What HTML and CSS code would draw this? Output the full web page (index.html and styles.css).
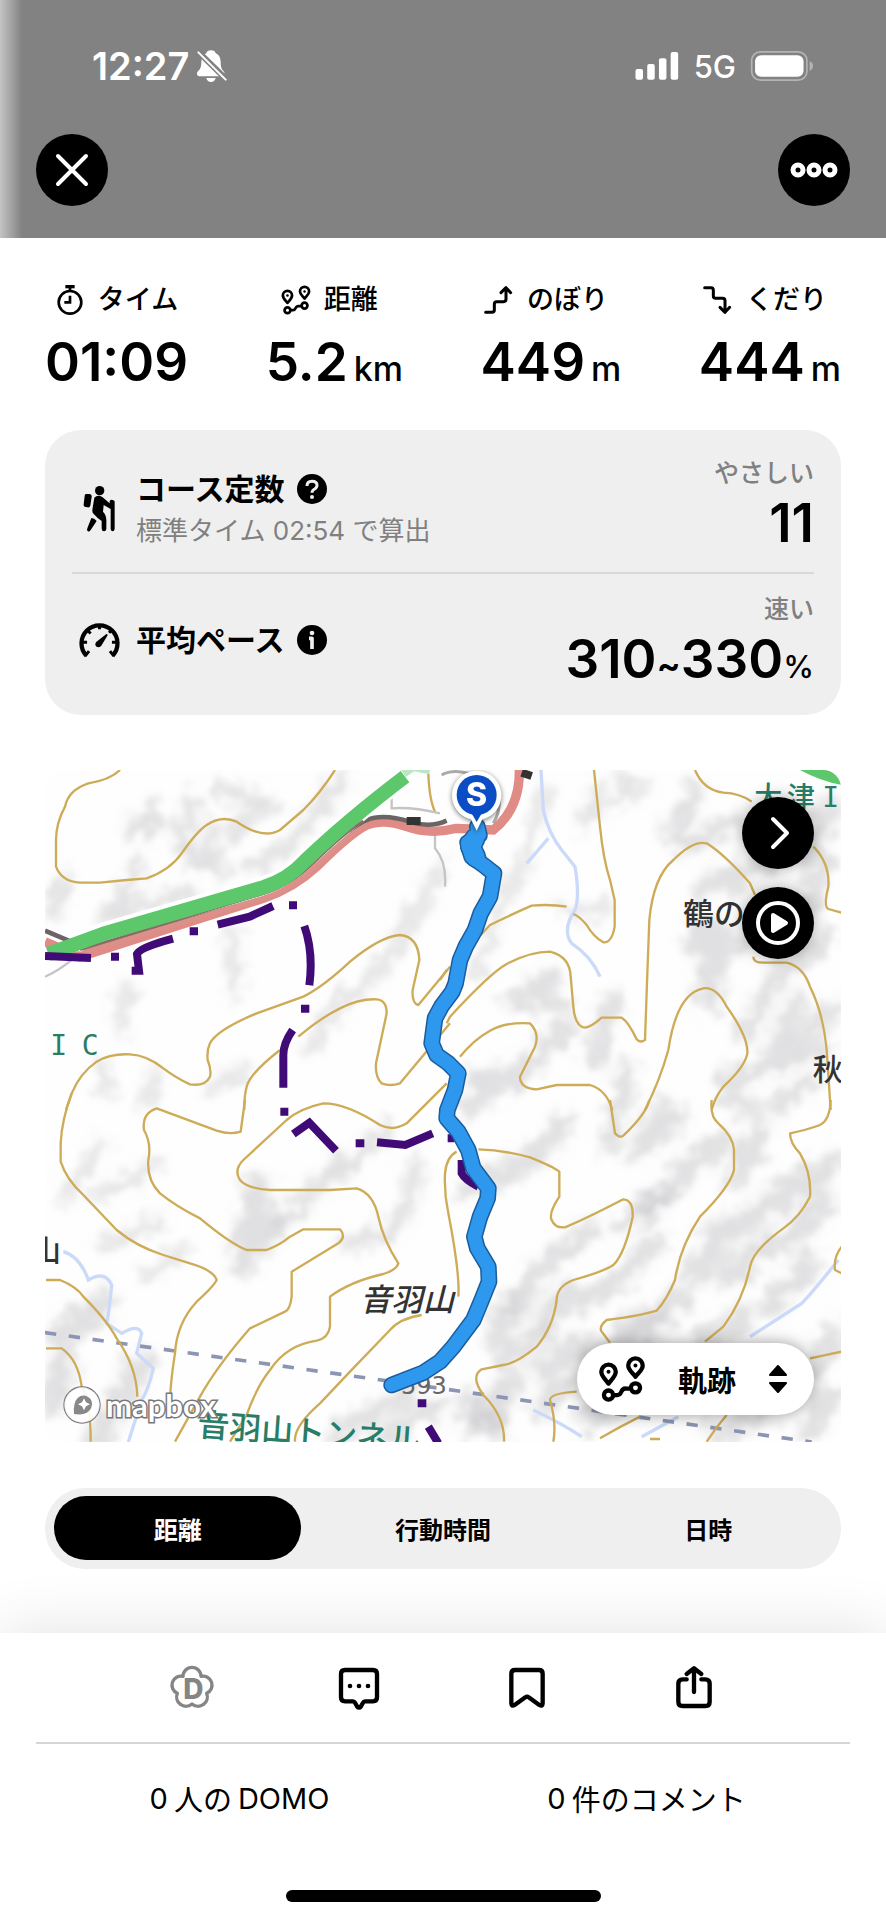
FILE: index.html
```html
<!DOCTYPE html>
<html lang="ja">
<head>
<meta charset="utf-8">
<meta name="viewport" content="width=device-width, initial-scale=1">
<title>活動記録</title>
<link rel="stylesheet" href="styles.css">
</head>
<body>
<svg class="defs" aria-hidden="true">
  <symbol id="route" viewBox="0 0 144 140">
    <g fill="none" stroke="currentColor" stroke-width="13" stroke-linecap="round" stroke-linejoin="round">
      <path d="M31 84C20 70 9 61 9 48a22 22 0 0 1 44 0C53 61 42 70 31 84Z"/>
      <path d="M113 63C102 49 91 42 91 29a22 22 0 0 1 44 0C135 42 124 49 113 63Z"/>
      <circle cx="31" cy="119" r="14"/><circle cx="113" cy="97" r="14"/>
      <path d="M46 119h12c16 0 8-22 26-20h14"/>
    </g>
    <circle cx="31" cy="48" r="6" fill="currentColor"/><circle cx="113" cy="29" r="6" fill="currentColor"/>
  </symbol>
</svg>

<header class="hero">
  <div class="status">
    <div class="status-group">
      <span class="clock">12:27</span>
      <svg class="bell" viewBox="0 0 90 96"><path fill="#fff" d="M42 1c-8 0-13 4-14 9C18 14 13 24 13 36c0 16-4 22-10 28-6 7-3 15 6 15h66c8 0 10-8 5-15-6-6-9-12-9-28C71 24 66 14 56 10 55 5 50 1 42 1ZM28 84c2 8 7 12 14 12s12-4 14-12Z"/><path stroke="#828282" stroke-width="18" d="M-2 0 92 92"/><path stroke="#fff" stroke-width="6" stroke-linecap="round" d="M4 7 86 89"/></svg>
    </div>
    <div class="status-group status-right">
      <svg class="signal" viewBox="0 0 132 86" fill="#fff"><rect y="52" width="23" height="33" rx="6"/><rect x="36" y="37" width="23" height="48" rx="6"/><rect x="72" y="19" width="23" height="66" rx="6"/><rect x="108" width="23" height="85" rx="6"/></svg>
      <span class="network">5G</span>
      <svg class="battery" viewBox="0 0 184 88"><rect x="2" y="2" width="164" height="84" rx="26" fill="none" stroke="#b4b4b4" stroke-width="5"/><rect x="12" y="12" width="144" height="64" rx="18" fill="#fff"/><path fill="#b4b4b4" d="M174 30q10 4 10 14t-10 14Z"/></svg>
    </div>
  </div>
  <nav class="hero-nav">
    <button class="round" type="button" aria-label="閉じる"><svg viewBox="0 0 72 72"><path d="m22 22 28 28m0-28L22 50" fill="none" stroke="#fff" stroke-width="4" stroke-linecap="round"/></svg></button>
    <button class="round" type="button" aria-label="メニュー"><svg viewBox="0 0 72 72" fill="none" stroke="#fff" stroke-width="5"><circle cx="20" cy="36" r="5"/><circle cx="36" cy="36" r="5"/><circle cx="52" cy="36" r="5"/></svg></button>
  </nav>
</header>

<main class="content">
  <dl class="stats">
    <div class="stat">
      <dt><svg class="stat-icon" viewBox="0 0 84 90" fill="none" stroke="#000" stroke-width="8"><circle cx="42" cy="52" r="34"/><path d="M42 18V8M42 32v20H25"/><path stroke-width="10" d="M28 5h28"/></svg><span>タイム</span></dt>
      <dd>01:09</dd>
    </div>
    <div class="stat">
      <dt><svg class="stat-icon"><use href="#route"/></svg><span>距離</span></dt>
      <dd><span>5.2</span><small>km</small></dd>
    </div>
    <div class="stat">
      <dt><svg class="stat-icon" viewBox="0 0 90 84" fill="none" stroke="#000" stroke-width="9" stroke-linejoin="round" stroke-linecap="round"><path d="M5 79h19q7 0 7-7V54q0-7 7-7h21q7 0 7-7V5M51 20 66 5l14 15"/></svg><span>のぼり</span></dt>
      <dd><span>449</span><small>m</small></dd>
    </div>
    <div class="stat">
      <dt><svg class="stat-icon" viewBox="0 0 90 84" fill="none" stroke="#000" stroke-width="9" stroke-linejoin="round" stroke-linecap="round"><path d="M5 5h19q7 0 7 7v18q0 7 7 7h21q7 0 7 7v35M51 64l15 15 14-15"/></svg><span>くだり</span></dt>
      <dd><span>444</span><small>m</small></dd>
    </div>
  </dl>

  <section class="card">
    <div class="metric">
      <div class="metric-icon"><svg class="hiker" viewBox="0 0 108 144"><circle cx="56" cy="17" r="14"/><path d="M14 27h12q7 1 6 8l-4 27q-2 6-8 5l-7-1q-6-2-5-8l3-25q0-5 3-6ZM40 38q10-10 24-2l22 19V49q0-5 6-5t9 5v83q-1 7-6 7t-6-7V72L68 60l-2 20q12 12 10 34v18q-1 7-7 7t-7-7v-24Q47 98 39 88q-6-4-5-14Z"/><path d="M31 99q9 0 16 9l-18 27q-4 6-8 4-5-2-2-9Z"/></svg></div>
      <div class="metric-name">
        <h2>コース定数 <button class="hint" type="button" aria-label="コース定数について"><svg viewBox="0 0 90 90"><circle cx="45" cy="45" r="45"/><path d="M30 36q0-14 15-14t15 12q0 7-7 11-8 4-8 11" fill="none" stroke="#efefef" stroke-width="9"/><circle cx="45" cy="69" r="6" fill="#efefef"/></svg></button></h2>
        <p>標準タイム 02:54 で算出</p>
      </div>
      <div class="metric-value"><span class="grade">やさしい</span><strong>11</strong></div>
    </div>
    <div class="metric">
      <div class="metric-icon"><svg class="gauge" viewBox="0 0 124 110" fill="none" stroke="#000"><path stroke-width="13" d="M22 103A55 55 0 1 1 102 103"/><path stroke-width="9" d="M18 104l12-15M106 104 94 89M10 62h14M100 62h14M25 25l10 10M62 8v14M99 25l-8 8"/><path d="M52 61 83 37q5-1 3 5L67 73q-7 7-14 3-7-7-1-15Z" fill="#000" stroke="none"/></svg></div>
      <div class="metric-name">
        <h2>平均ペース <button class="hint" type="button" aria-label="平均ペースについて"><svg viewBox="0 0 90 90"><circle cx="45" cy="45" r="45"/><circle cx="45" cy="24" r="7" fill="#efefef"/><path d="M36 40h9v32" fill="none" stroke="#efefef" stroke-width="11" stroke-linejoin="round"/></svg></button></h2>
      </div>
      <div class="metric-value"><span class="grade">速い</span><strong>310<small class="tilde">~</small>330<small>%</small></strong></div>
    </div>
  </section>

  <section class="map" aria-label="地図">
    <svg class="map-art" viewBox="0 0 2388 2016" preserveAspectRatio="xMidYMid slice">
      <defs>
        <filter id="relief" x="-5%" y="-5%" width="110%" height="110%">
          <feGaussianBlur stdDeviation="16" result="soft"/>
          <feTurbulence type="fractalNoise" baseFrequency=".02" numOctaves="2" seed="7" result="noise"/>
          <feDisplacementMap in="soft" in2="noise" scale="90" xChannelSelector="R" yChannelSelector="G"/>
          <feGaussianBlur stdDeviation="7"/>
        </filter>
      </defs>
      <rect width="2388" height="2016" fill="#fefefe"/>
      <!-- hill shading -->
      <g filter="url(#relief)" fill="none" stroke="#c4c4c8" stroke-opacity=".5" stroke-width="44" stroke-linecap="round">
        <path d="M320 110 250 200 360 150M440 90l-30 140 90 60-10-120M520 60l160 40M640 130l-90 60M420 260l120 30M60 330 20 440M280 290 190 440l200-70 60 20M760 200 620 300M900 20 760 190"/>
        <path d="M1190 290 1110 440 980 630 880 700 790 840M250 650l-20 130M560 500l10 170M170 880l20 90M330 910 310 1000M600 900 500 950" stroke-width="36"/>
        <path d="M170 1120 60 1280M330 1190 150 1280M350 1350 180 1420M420 1440 300 1510" stroke-width="36"/>
        <path d="M640 1250 590 1480M680 1340 640 1430" stroke-width="80"/>
        <path d="M880 1170 780 1290 700 1380M1110 1180q-10 150-80 210l-130 30M1020 1080 880 1220" stroke-width="46"/>
        <path d="M180 1600 40 1700M290 1780 160 2000M60 1770 20 1900" stroke-width="80"/>
        <path d="M1100 1870 870 1990M1180 1900 1010 2010M1260 1890l100 90" stroke-width="60"/>
        <path d="M1500 60 1450 250 1360 420 1290 620M1660 50 1610 170M1800 60 1720 20M1540 400q60 50 150 10M1760 50 1660 130" stroke-width="32"/>
        <path d="M1950 60 1880 200M2060 160 1920 230M2240 190l100 100-60 110M2060 300l-90 60M2200 260l-140 90M2360 100l-40 100" stroke-width="60"/>
        <path d="M1520 620 1430 680l120 20M1570 770 1440 900 1290 930M1700 700l-50 180M1750 900 1690 1130M1400 930 1250 1010" stroke-width="60"/>
        <path d="M1950 500l60 60M1980 470l80 60M2000 600l-10 90" stroke-width="84"/>
        <path d="M2350 500 2180 640 2100 790M2370 720 2160 870M2340 830 2050 930M2300 940l-110 60M2260 690 2200 800M2040 980l90 40" stroke-width="56"/>
        <path d="M1560 1060 1460 1170 1260 1260M1850 1020 1780 1140M2040 1110 1920 1200 1820 1310M2150 1080 2070 1230M1900 1040l-60 60" stroke-width="66"/>
        <path d="M2260 1230 2130 1340 2000 1390M2330 1300 2230 1410M2370 1180 2280 1240M2160 1430 2050 1520M2300 1480 2180 1600M2030 1420 1950 1510" stroke-width="76"/>
        <path d="M1840 1410 1700 1540 1580 1600M1640 1380 1520 1470M1480 1490 1420 1620M1920 1580 1740 1680M1560 1570 1500 1650M1840 1290 1740 1360" stroke-width="64"/>
        <path d="M1390 1610 1350 1700M1500 1690 1380 1760M1620 1720 1490 1800M1400 1830 1280 1960M1550 1850l-60 60M1380 1890l-50 70" stroke-width="70"/>
        <path d="M1850 1650 1700 1760M2100 1640l-120 70M2370 1690 2320 1780M2350 1880 2290 1990M2160 1930 2020 1990M1720 1900l-90 60" stroke-width="70"/>
      </g>
      <!-- streams -->
      <g fill="none" stroke="#cbdaf8" stroke-width="10">
        <path d="M1488 0 1495 120Q1510 190 1550 240L1590 290Q1605 380 1590 420 1550 480 1580 520 1640 560 1665 620M1510 205 1445 280"/>
        <path d="M55 1445Q105 1460 130 1530 180 1500 200 1545 190 1640 185 1660L230 1690Q280 1660 290 1690L275 1750 325 1795Q310 1860 290 1890L250 2016"/>
        <path d="M2380 1470Q2300 1570 2270 1600L2115 1700M1465 1920Q1550 1960 1610 2000M1900 1940l-110 60"/>
      </g>
      <!-- railway tunnel -->
      <path d="M0 1688 1185 1855 2300 2016" fill="none" stroke="#8c95b3" stroke-width="11" stroke-dasharray="34 38"/>
      <!-- contours -->
      <g fill="none" stroke="#cdab57" stroke-width="7" stroke-linejoin="round">
        <path transform="translate(-45 -30)" d="M270 30Q240 60 175 70 115 90 105 140 78 190 78 240V320Q95 365 150 368H210L290 360 350 355Q420 330 455 280 500 215 530 195 575 165 620 185 700 240 750 210L820 150Q870 100 915 30M1195 40Q1198 120 1215 155M1260 620 1165 735Q1145 730 1148 690L1168 600Q1165 530 1110 525 1050 530 960 605 880 680 820 710L680 760Q560 810 540 850 530 870 533 900 545 930 540 950 525 980 480 973 440 955 400 925 350 885 300 883 240 880 200 905 150 940 125 1000L108 1050M1260 790 1110 970Q1080 980 1055 970 1035 950 1038 910L1070 760Q1070 720 1040 718 990 715 930 745 870 775 805 830M750 870Q660 940 650 980 642 1010 643 1050"/>
        <path transform="translate(-45 990)" d="M125-20Q95 60 92 130V185Q110 240 160 285L260 390Q320 440 400 465L480 490Q550 510 560 540 550 560 500 605 440 670 435 760 425 820 420 890M645 0 632 95Q600 105 560 92L380 25Q335 40 342 90 365 130 355 180 350 240 390 280 440 320 510 355 600 430 650 450H710Q750 435 780 410L820 388H930Q950 410 925 430L785 515V590Q780 630 765 635L660 685Q560 800 510 890L435 1025M1250-50 1130 70Q1090 95 1050 75 950 10 880 10 810 25 770 60L640 180Q610 210 630 240 650 265 720 270H900L980 265Q1030 280 1045 350 1060 420 1105 490 1100 510 1060 522 960 545 900 590V680Q895 715 860 722 770 735 720 810 680 860 650 945L600 1025M1175 645Q1110 655 1080 690L960 815 870 910Q790 980 795 1025M48 540H90Q140 560 160 590 230 660 260 715 320 800 322 890M48 745H95Q145 780 155 860 182 900 182 1025"/>
        <path transform="translate(1185 -30)" d="M462 30 480 200Q490 300 510 360L524 420V500Q515 550 490 547 460 530 440 495 420 470 400 462M380 440Q330 432 275 437 200 470 150 495L122 525M765 30Q790 90 850 98 900 100 935 125M1120 260Q1170 310 1165 380 1150 440 1165 447L1205 458M0 660 20 630M20 790 30 770Q150 640 200 612 270 575 330 575 390 590 392 650L400 740Q405 800 435 803 455 800 485 773H545Q565 785 590 838 600 850 615 840L622 640 628 480Q640 350 700 300 760 240 800 250 850 280 930 370L945 405M60 890Q100 840 150 812 200 785 270 790 300 820 285 860L240 950Q240 985 290 988L350 975H450Q500 990 517 1050M940 590Q940 608 970 608H1040Q1090 620 1110 680 1150 760 1160 870L1172 1050M615 1050Q660 960 685 870 710 700 790 685 830 680 860 740 925 830 922 880 915 920 850 980 825 1010 815 1050"/>
        <path transform="translate(1185 990)" d="M510 0 525 100Q540 115 550 107 620 40 628 0M815 0Q810 50 835 70 880 110 882 150V210Q870 260 780 350 720 440 705 540 680 600 650 632 600 648 500 660 475 680 485 695L510 728M1172 0Q1170 60 1140 75 1100 90 1050 100 1050 130 1080 160 1115 220 1110 290 1080 350 1030 385 940 450 930 500 910 600 850 680L795 725M1205 440Q1180 470 1185 510L1205 520M1110 775 1205 755M860 945Q830 980 800 1025M115 148Q190 150 270 172 340 200 358 215V290Q325 340 335 360 345 385 375 382 430 360 550 298 580 300 578 350 555 460 520 495 490 515 400 540 350 560 350 600 340 680 290 740 230 790 190 795L125 808Q90 830 130 885 195 950 192 1025M410 875Q330 880 330 900 350 970 340 1025M480 1015Q540 980 600 950M630 1017H660M50 155Q20 170 15 220 12 280 25 340 60 520 55 590"/>
      </g>
      <!-- roads -->
      <g fill="none" transform="translate(-45 -30)">
        <path d="M45 650Q90 630 130 595M1085 110v35q60-5 145 15M1215 215v50q35 40 30 115" stroke="#c4c4c4" stroke-width="7"/>
        <path d="M1235 45q45-25 120 10M1400 80q20 60-10 110" stroke="#aaa" stroke-width="9"/>
        <path d="M45 545 150 590 700 415Q790 385 860 320 960 220 1010 195 1060 175 1130 200 1200 225 1280 205L1390 210Q1470 145 1468 30" stroke="#e08b85" stroke-width="28"/>
        <path d="M45 512 130 548M160 568 700 400Q780 375 850 305 960 200 1010 180 1060 160 1140 185 1200 205 1250 182" stroke="#6c6464" stroke-width="14"/>
        <path d="M130 548 225 515 700 378Q775 355 825 300 950 180 1140 40" stroke="#fff" stroke-width="58"/>
        <path d="M160 575 700 415Q790 385 865 312 960 220 1010 195" stroke="#dc908a" stroke-width="14"/>
        <path d="M150 569 700 401Q785 374 850 309 940 220 1000 183" stroke="#8d6a66" stroke-width="8"/>
        <path d="M55 582 225 520 700 382Q775 358 825 303 950 183 1125 50" stroke="#5dc76c" stroke-width="43"/>
        <path d="M1120 40l30-20 50 10" stroke="#bde6c6" stroke-width="26"/>
        <path d="M1130 183h42M1475 38l30 10" stroke="#333" stroke-width="24"/>
      </g>
      <path d="M2265 0h123v44Q2330 35 2265 0Z" fill="#5dc76c"/>
      <!-- prefectural border -->
      <g fill="none" stroke="#400a77" stroke-width="24">
        <path d="M0 558l138 6M260 602h22l-6-50q10-20 108-46M518 464l96-24 70-32M778 468q28 80 15 178M743 780q-28 40-28 75v98M745 1092l48-34 80 84M996 1117l85 8 82-35M1250 1170v40q10 20 50 40M1150 1970l30 50"/>
        <path d="M198 560h24M434 484h25M732 406h24M768 716h25M706 1025h24M932 1120h26M1118 1900h26M1208 1105h20"/>
      </g>
      <!-- place names -->
      <g class="map-text" font-size="84">
        <g fill="#287d66"><text x="2128" y="110">大</text><text x="2226" y="110">津</text><text x="2332" y="110" class="latin">I</text><text x="16" y="856" class="latin">I</text><text x="110" y="856" class="latin">C</text><text transform="translate(455 1998) rotate(4)" font-size="96">音羽山トンネル</text></g>
        <g fill="#333"><text x="1915" y="464" font-size="92">鶴の</text><text x="2303" y="930" font-size="90">秋</text><text x="-42" y="1474" font-size="90">山</text><text x="945" y="1624" font-size="94" class="slant">音羽山</text><text x="1068" y="1872" font-size="72" fill="#666" class="height">593</text></g>
      </g>
      <!-- recorded track -->
      <g fill="none" stroke-linecap="round" stroke-linejoin="round">
        <g id="track">
          <path d="M1297 170 1303 195 1268 218 1280 260 1315 285 1347 310 1335 380 1307 430 1290 480 1262 530 1245 570 1232 640 1222 665 1190 708 1170 745 1160 820 1175 855 1210 880 1240 910 1230 960 1207 1020 1205 1045 1240 1085 1270 1140 1285 1195 1330 1255 1328 1285 1305 1340 1288 1400 1297 1435 1330 1490 1332 1535 1310 1590 1285 1650 1225 1730 1185 1775 1135 1808 1040 1845" stroke="#1b5c9e" stroke-width="50"/>
          <path d="M1290 205 1277 230 1292 262" stroke="#1b5c9e" stroke-width="64"/>
          <path d="M1290 205 1277 230 1292 262" stroke="#2d98ee" stroke-width="55"/>
          <path d="M1297 170 1303 195 1268 218 1280 260 1315 285 1347 310 1335 380 1307 430 1290 480 1262 530 1245 570 1232 640 1222 665 1190 708 1170 745 1160 820 1175 855 1210 880 1240 910 1230 960 1207 1020 1205 1045 1240 1085 1270 1140 1285 1195 1330 1255 1328 1285 1305 1340 1288 1400 1297 1435 1330 1490 1332 1535 1310 1590 1285 1650 1225 1730 1185 1775 1135 1808 1040 1845" stroke="#2d98ee" stroke-width="41"/>
        </g>
      </g>
      <!-- start pin -->
      <g class="pin"><path d="M1295 182 1278 148A74 74 0 1 1 1312 148Z" fill="#fff"/><path d="M1295 156l-14-24h28Z" fill="#0a4dc4"/><circle cx="1295" cy="75" r="60" fill="#0a4dc4"/><text x="1295" y="109" text-anchor="middle" fill="#fff">S</text></g>
    </svg>
    <div class="mapbox"><svg class="mapbox-mark" viewBox="0 0 114 114"><circle cx="57" cy="57" r="53" fill="#fff" fill-opacity=".9" stroke="#777" stroke-width="6"/><path fill="#888" d="M33 84q-3-34 11-48 14-12 30-4 14 8 13 23-2 22-23 28-14 4-31 1Z"/><path fill="#fff" d="m63 37 6 12 12 6-12 6-6 12-6-12-12-6 12-6Z"/></svg><span>mapbox</span></div>
    <div class="map-tools">
      <button class="round" type="button" aria-label="次へ"><svg viewBox="0 0 72 72"><path d="m31 22 14 14-14 14" fill="none" stroke="#fff" stroke-width="4" stroke-linecap="round" stroke-linejoin="round"/></svg></button>
      <button class="round" type="button" aria-label="再生"><svg viewBox="0 0 72 72"><circle cx="36" cy="36" r="20" fill="none" stroke="#fff" stroke-width="4"/><path d="m31 28 13 8-13 8Z" fill="#fff" stroke="#fff" stroke-width="4" stroke-linejoin="round"/></svg></button>
    </div>
    <button class="layer" type="button"><svg class="layer-icon"><use href="#route"/></svg><span>軌跡</span><svg class="sort" viewBox="0 0 20 30"><path d="M10 2l8 9H2ZM10 28l8-9H2Z" stroke="#000" stroke-width="2" stroke-linejoin="round"/></svg></button>
  </section>

  <div class="segments" role="tablist">
    <button type="button" role="tab" aria-selected="true">距離</button>
    <button type="button" role="tab" aria-selected="false">行動時間</button>
    <button type="button" role="tab" aria-selected="false">日時</button>
  </div>
</main>

<footer class="sheet">
  <div class="actions">
    <button type="button" aria-label="DOMO"><svg viewBox="0 0 132 132"><path fill="none" stroke="#858585" stroke-width="10" stroke-linejoin="round" d="M39 31A27 27 0 0 1 93 31 27 27 0 0 1 110 82 28 28 0 0 1 66 114 28 28 0 0 1 22 82 27 27 0 0 1 39 31Z"/><text x="70" y="100" text-anchor="middle">D</text></svg></button>
    <button type="button" aria-label="コメント"><svg viewBox="0 0 132 132"><path fill="none" stroke="#000" stroke-width="13" stroke-linejoin="round" d="M24 12h84q12 0 12 12v70q0 12-12 12H84q-4 0-6 4l-6 11q-6 8-12 0l-6-11q-2-4-6-4H24q-12 0-12-12V24q0-12 12-12Z"/><g fill="#000"><circle cx="39" cy="60" r="7"/><circle cx="66" cy="60" r="7"/><circle cx="93" cy="60" r="7"/></g></svg></button>
    <button type="button" aria-label="保存"><svg viewBox="0 0 132 132"><path fill="none" stroke="#000" stroke-width="13" stroke-linejoin="round" d="M30 12h72q11 0 11 11v89q0 11-10 5L71 94q-5-4-10 0l-32 23q-10 6-10-5V23q0-11 11-11Z"/></svg></button>
    <button type="button" aria-label="共有"><svg viewBox="0 0 132 132"><path fill="none" stroke="#000" stroke-width="13" stroke-linejoin="round" stroke-linecap="round" d="M44 40H32q-13 0-13 13v54q0 13 13 13h68q13 0 13-13V53q0-13-13-13H88M66 78V10M44 24 66 7l22 17"/></svg></button>
  </div>
  <div class="counts">
    <a href="#domo"><span>0</span><span>人の</span><span>DOMO</span></a>
    <a href="#comments"><span>0</span><span>件のコメント</span></a>
  </div>
  <div class="home-bar"></div>
</footer>
</body>
</html>
```

FILE: styles.css
```css
* { box-sizing: border-box; }

body {
  margin: 0;
  background: #fff;
  color: #000;
  font-family: Inter, "Noto Sans CJK JP", sans-serif;
}

button {
  margin: 0;
  padding: 0;
  border: 0;
  background: none;
  color: inherit;
  font: inherit;
}

svg { display: block; overflow: visible; }
.defs { position: absolute; width: 0; height: 0; }
h2, p, dl, dd { margin: 0; }

/* Header */
.hero {
  padding-bottom: 32px;
  background: linear-gradient(90deg, #c4c4c4, #828282 22px);
}

.status {
  display: flex;
  justify-content: space-between;
  align-items: center;
  height: 134px;
  padding: 0 73px 2px 92px;
  color: #fff;
}

.status-group { display: flex; align-items: center; gap: 8px; }
.status-right { gap: 15px; }
.clock { font-size: 38px; font-weight: 600; }
.bell { width: 30px; height: 32px; overflow: hidden; }
.signal { width: 44px; height: 28px; }
.network { font-size: 31px; font-weight: 500; }
.battery { width: 62px; height: 30px; }

.hero-nav {
  display: flex;
  justify-content: space-between;
  padding: 0 36px;
}

.round {
  width: 72px;
  height: 72px;
  border-radius: 50%;
  background: #000;
}

/* Totals */
.content { padding: 44px 45px 64px; }

.stats { display: flex; justify-content: space-between; }

.stat {
  display: flex;
  flex-direction: column;
  align-items: center;
  gap: 14px;
}

.stat dt {
  display: flex;
  align-items: center;
  gap: 13px;
  font-size: 27px;
  font-weight: 500;
  line-height: 36px;
}

.stat + .stat dt { padding-right: 10px; }
.stat-icon { width: 30px; height: 30px; }

.stat dd {
  display: flex;
  align-items: baseline;
  gap: 6px;
  height: 60px;
  font-size: 53px;
  font-weight: 600;
  line-height: 60px;
  white-space: nowrap;
}

.stat dd small { font-size: 34px; font-weight: 500; line-height: 40px; }

/* Metrics card */
.card {
  margin-top: 38px;
  padding: 0 27px;
  border-radius: 36px;
  background: #efefef;
}

.metric {
  display: flex;
  align-items: center;
  gap: 10px;
  height: 142px;
  padding-top: 15px;
}

.metric + .metric {
  height: 143px;
  padding-top: 0;
  border-top: 2px solid #d8d8d8;
}

.metric-icon { display: flex; justify-content: center; width: 54px; }
.hiker { width: 36px; height: 48px; }
.gauge { width: 41px; height: 36px; }
.metric-name { flex: 1; }
.metric + .metric .metric-icon,
.metric + .metric .metric-name { padding-bottom: 10px; }

.metric-name h2 {
  display: flex;
  align-items: center;
  gap: 12px;
  font-size: 30px;
  font-weight: 700;
  line-height: 44px;
}

.metric-name p {
  color: #808080;
  font-size: 26px;
  line-height: 40px;
}

.hint { width: 30px; height: 30px; }

.metric-value {
  display: flex;
  flex-direction: column;
  align-items: flex-end;
  padding-bottom: 8px;
}

.grade {
  color: #808080;
  font-size: 25px;
  font-weight: 500;
  line-height: 36px;
}

.metric-value strong {
  font-size: 53px;
  font-weight: 600;
  font-kerning: none;
  line-height: 64px;
}

.metric-value small { font-size: 31px; font-weight: 500; line-height: 32px; }
.metric-value .tilde { font-size: 36px; font-weight: 600; }

/* Map */
.map {
  position: relative;
  aspect-ratio: 796 / 672;
  margin-top: 55px;
  overflow: hidden;
  border-radius: 18px;
}

.map-art { width: 100%; height: 100%; }
.map-text { font-family: "Noto Sans CJK JP", sans-serif; font-weight: 500; }
.latin { font-family: "DejaVu Sans Mono", monospace; }
.height { font-family: "DejaVu Sans", sans-serif; }
.slant { font-style: italic; }
.pin { font-size: 96px; font-weight: 800; filter: drop-shadow(0 4px 8px #0008); }

.map-tools {
  position: absolute;
  top: 27px;
  right: 27px;
  display: grid;
  gap: 18px;
}

.map-tools .round { box-shadow: 0 0 16px #0005; }

.layer {
  position: absolute;
  right: 27px;
  bottom: 27px;
  display: flex;
  align-items: center;
  justify-content: space-between;
  width: 237px;
  height: 72px;
  padding: 0 26px 0 21px;
  border-radius: 36px;
  background: #fff;
  box-shadow: 0 0 16px #0006;
  font-size: 29px;
  font-weight: 700;
}

.layer-icon { width: 48px; height: 46px; }
.sort { width: 20px; height: 30px; }

.mapbox {
  position: absolute;
  bottom: 18px;
  left: 18px;
  display: flex;
  align-items: center;
  gap: 5px;
  color: #fff;
  font-family: Lato, sans-serif;
  font-size: 31px;
  font-weight: 700;
  line-height: 38px;
  -webkit-text-stroke: 3px #777;
  paint-order: stroke fill;
}

.mapbox-mark { width: 38px; height: 38px; }

/* Tabs */
.segments {
  display: grid;
  grid-template-columns: repeat(3, 1fr);
  margin-top: 46px;
  padding: 8px 0 9px;
  border-radius: 40px;
  background: #efefef;
}

.segments button {
  height: 64px;
  margin: 0 9px;
  border-radius: 32px;
  font-size: 24px;
  font-weight: 700;
}

.segments [aria-selected="true"] { background: #000; color: #fff; }

/* Bottom sheet */
.sheet {
  position: relative;
  padding: 0 36px 18px;
  background: #fff;
  box-shadow: 0 0 60px #0000001f;
}

.actions {
  display: grid;
  grid-template-columns: repeat(4, 1fr);
  height: 111px;
  padding: 0 72px;
  border-bottom: 2px solid #d6d6d6;
}

.actions button { display: grid; place-items: center; }
.actions svg { width: 44px; height: 44px; }
.actions text { fill: #858585; font-family: Inter, sans-serif; font-size: 84px; font-weight: 800; }

.counts { display: grid; grid-template-columns: 1fr 1fr; }

.counts a {
  display: flex;
  justify-content: center;
  align-items: center;
  gap: 6px;
  height: 108px;
  color: inherit;
  font-size: 29px;
  text-decoration: none;
}

.home-bar {
  width: 315px;
  height: 12px;
  margin: 38px auto 0;
  border-radius: 6px;
  background: #000;
}
```
